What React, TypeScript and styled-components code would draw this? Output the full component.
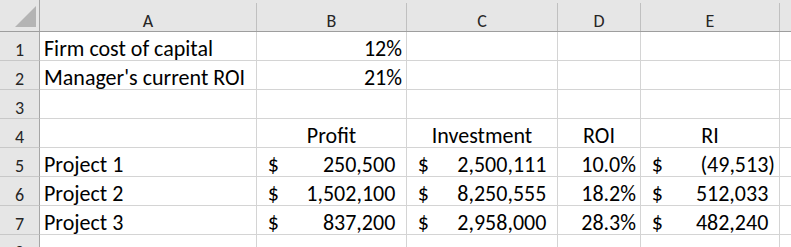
import React from "react";
import styled, {createGlobalStyle} from "styled-components";

const GlobalStyle = createGlobalStyle`
	html, body {
		margin: 0;
		padding: 0;
		background: #ffffff;
	}
	body {
		font-family: Carlito, Calibri, Lato, "Liberation Sans", sans-serif;
		overflow: hidden;
	}
`;

// column widths in px, borders included
const widths = [217, 150, 151, 83, 139, 60];
const letters = ["A", "B", "C", "D", "E", ""];

type Align = "left" | "right" | "center";

type CellData =
	| null
	| {text: string; align?: Align}
	| {money: string; negative?: boolean};

const rows: CellData[][] = [
	[{text: "Firm cost of capital"}, {text: "12%", align: "right"}],
	[{text: "Manager's current ROI"}, {text: "21%", align: "right"}],
	[],
	[
		null,
		{text: "Profit", align: "center"},
		{text: "Investment", align: "center"},
		{text: "ROI", align: "center"},
		{text: "RI", align: "center"},
	],
	[
		{text: "Project 1"},
		{money: "250,500"},
		{money: "2,500,111"},
		{text: "10.0%", align: "right"},
		{money: "49,513", negative: true},
	],
	[
		{text: "Project 2"},
		{money: "1,502,100"},
		{money: "8,250,555"},
		{text: "18.2%", align: "right"},
		{money: "512,033"},
	],
	[
		{text: "Project 3"},
		{money: "837,200"},
		{money: "2,958,000"},
		{text: "28.3%", align: "right"},
		{money: "482,240"},
	],
	[],
];

const renderCell = (cell: CellData) => {
	if (!cell) return null;
	if ("money" in cell) {
		return (
			<Money>
				<span>
					<Hidden>(</Hidden>$
				</span>
				<span>
					{cell.negative ? `(${cell.money})` : cell.money}
					{!cell.negative && <Hidden>)</Hidden>}
				</span>
			</Money>
		);
	}
	return <Text $align={cell.align || "left"}>{cell.text}</Text>;
};

export default function App() {
	return (
		<>
			<GlobalStyle />
			<Sheet>
				<HeaderRow>
					<Corner>
						<svg width="39" height="31" viewBox="0 0 39 31">
							<polygon points="36,6 36,27 15,27" fill="#b4b4b4" />
						</svg>
					</Corner>
					{letters.map((l, i) => (
						<ColHead key={i} $w={widths[i]}>
							{l}
						</ColHead>
					))}
				</HeaderRow>
				{rows.map((row, r) => (
					<Row key={r}>
						<RowHead>{r + 1}</RowHead>
						{widths.map((w, c) => (
							<Cell key={c} $w={w}>
								{renderCell(row[c] ?? null)}
							</Cell>
						))}
					</Row>
				))}
			</Sheet>
		</>
	);
}

const Sheet = styled.div`
	display: flex;
	flex-direction: column;
	width: 791px;
	height: 247px;
	overflow: hidden;
	color: #000;
`;

const HeaderRow = styled.div`
	display: flex;
	flex-shrink: 0;
	align-items: flex-end;
	height: 31px;
	background: #e6e6e6;
	border-bottom: 1px solid #9e9e9e;
`;

const Corner = styled.div`
	width: 40px;
	height: 31px;
	flex-shrink: 0;
	box-sizing: border-box;
	border-right: 1px solid #a6a6a6;

	svg {
		display: block;
	}
`;

const ColHead = styled.div<{$w: number}>`
	width: ${(p) => p.$w}px;
	flex-shrink: 0;
	height: 28px;
	box-sizing: border-box;
	border-right: 1px solid #c0c0c0;
	display: flex;
	align-items: flex-end;
	justify-content: center;
	padding-bottom: 1px;
	font-size: 18px;
	line-height: 1;
	color: #262626;
`;

const Row = styled.div`
	display: flex;
	flex-shrink: 0;
	height: 29px;
`;

const RowHead = styled.div`
	width: 40px;
	flex-shrink: 0;
	box-sizing: border-box;
	background: #e6e6e6;
	border-right: 1px solid #a6a6a6;
	border-bottom: 1px solid #c8c8c8;
	display: flex;
	align-items: flex-end;
	justify-content: center;
	padding-bottom: 1px;
	font-size: 18px;
	line-height: 1;
	color: #262626;
`;

const Cell = styled.div<{$w: number}>`
	width: ${(p) => p.$w}px;
	flex-shrink: 0;
	box-sizing: border-box;
	border-right: 1px solid #d4d4d4;
	border-bottom: 1px solid #d4d4d4;
	display: flex;
	align-items: flex-end;
	padding: 0 4px;
	font-size: 22px;
	line-height: 1;
	white-space: nowrap;
`;

const Text = styled.span<{$align: Align}>`
	flex: 1;
	text-align: ${(p) => p.$align};
`;

const Money = styled.div`
	flex: 1;
	display: flex;
	justify-content: space-between;
`;

const Hidden = styled.span`
	visibility: hidden;
`;
